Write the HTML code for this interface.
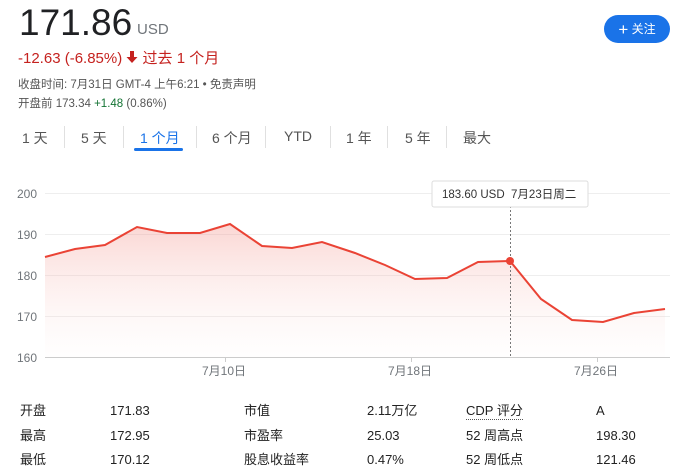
<!DOCTYPE html>
<html><head><meta charset="utf-8"><style>
body{margin:0;width:690px;height:474px;background:#fff;font-family:"Liberation Sans","Noto Sans CJK SC",sans-serif;position:relative;overflow:hidden;color:#222}
.a{position:absolute;white-space:nowrap}
.t{font-size:14px;color:#555;top:128px}
.d{position:absolute;top:126px;width:1px;height:22px;background:#e0e0e0}
.s{font-size:13px;color:#222;line-height:16px;height:16px}
</style></head><body>
<div class="a" style="left:19px;top:2px;font-size:37px;color:#202124">171.86</div>
<div class="a" style="left:137px;top:21px;font-size:15px;color:#70757a">USD</div>
<div class="a" style="left:18px;top:47px;font-size:15px;color:#c5221f">-12.63 (-6.85%) <svg width="12" height="14" viewBox="0 0 12 14" style="vertical-align:-1px"><path d="M4 1h4v6h3.5L6 13 0.5 7H4z" fill="#c5221f"/></svg> 过去 1 个月</div>
<div class="a" style="left:18px;top:76px;font-size:11.5px;color:#555">收盘时间: 7月31日 GMT-4 上午6:21 • 免责声明</div>
<div class="a" style="left:18px;top:95px;font-size:11.5px;color:#555">开盘前 173.34 <span style="color:#137333">+1.48</span> (0.86%)</div>
<div class="a" style="left:604px;top:15px;width:66px;height:28px;border-radius:14px;background:#1a73e8;color:#fff;font-size:12px;line-height:28px;text-align:center"><span style="font-size:17px;vertical-align:-2px">+</span> 关注</div>
<div class="a t" style="left:22px">1 天</div><div class="d" style="left:64px"></div>
<div class="a t" style="left:81px">5 天</div><div class="d" style="left:123px"></div>
<div class="a t" style="left:140px;color:#1a73e8">1 个月</div><div class="d" style="left:196px"></div>
<div class="a" style="left:134px;top:148px;width:49px;height:3px;border-radius:2px;background:#1a73e8"></div>
<div class="a t" style="left:212px">6 个月</div><div class="d" style="left:265px"></div>
<div class="a t" style="left:284px">YTD</div><div class="d" style="left:330px"></div>
<div class="a t" style="left:346px">1 年</div><div class="d" style="left:387px"></div>
<div class="a t" style="left:405px">5 年</div><div class="d" style="left:446px"></div>
<div class="a t" style="left:463px">最大</div>
<svg class="a" style="left:0;top:0" width="690" height="390">
<defs><linearGradient id="g" x1="0" y1="0" x2="0" y2="1"><stop offset="0" stop-color="#f28b82" stop-opacity=".35"/><stop offset="1" stop-color="#fce8e6" stop-opacity=".05"/></linearGradient></defs>
<g stroke="#eee" stroke-width="1"><line x1="45" y1="193.5" x2="670" y2="193.5"/><line x1="45" y1="234.5" x2="670" y2="234.5"/><line x1="45" y1="275.5" x2="670" y2="275.5"/><line x1="45" y1="316.5" x2="670" y2="316.5"/></g>
<line x1="45" y1="357.5" x2="670" y2="357.5" stroke="#ccc"/>
<g stroke="#ccc"><line x1="225.5" y1="357" x2="225.5" y2="362"/><line x1="411.5" y1="357" x2="411.5" y2="362"/><line x1="597.5" y1="357" x2="597.5" y2="362"/></g>
<g font-size="12" fill="#70757a" font-family="Liberation Sans,Noto Sans CJK SC,sans-serif">
<text x="17" y="198">200</text><text x="17" y="239">190</text><text x="17" y="280">180</text><text x="17" y="321">170</text><text x="17" y="362">160</text>
<text x="202" y="375">7月10日</text><text x="388" y="375">7月18日</text><text x="574" y="375">7月26日</text></g>
<path d="M45 257L75 249L105 245L137 227L167 233L200 233L230 224L262 246L292 248L322 242L355 253L385 265L415 279L447 278L478 262L510 261L541 299L572 320L603 322L634 313L665 309L665 357L45 357Z" fill="url(#g)"/>
<path d="M45 257L75 249L105 245L137 227L167 233L200 233L230 224L262 246L292 248L322 242L355 253L385 265L415 279L447 278L478 262L510 261L541 299L572 320L603 322L634 313L665 309" fill="none" stroke="#ea4335" stroke-width="2"/>
<line x1="510.5" y1="206" x2="510.5" y2="357" stroke="#777" stroke-dasharray="2,2"/>
<circle cx="510" cy="261" r="4" fill="#ea4335"/>
<rect x="432" y="181" width="156" height="26" rx="2" fill="#fff" stroke="#ddd"/>
<text x="442" y="198" font-size="11.5" fill="#333" font-family="Liberation Sans,Noto Sans CJK SC,sans-serif">183.60 USD &#160;7月23日周二</text>
</svg>
<div class="a s" style="left:20px;top:403px">开盘</div><div class="a s" style="left:110px;top:403px">171.83</div>
<div class="a s" style="left:244px;top:403px">市值</div><div class="a s" style="left:367px;top:403px">2.11万亿</div>
<div class="a s" style="left:466px;top:403px;border-bottom:1px dotted #555">CDP 评分</div><div class="a s" style="left:596px;top:403px">A</div>
<div class="a s" style="left:20px;top:428px">最高</div><div class="a s" style="left:110px;top:428px">172.95</div>
<div class="a s" style="left:244px;top:428px">市盈率</div><div class="a s" style="left:367px;top:428px">25.03</div>
<div class="a s" style="left:466px;top:428px">52 周高点</div><div class="a s" style="left:596px;top:428px">198.30</div>
<div class="a s" style="left:20px;top:452px">最低</div><div class="a s" style="left:110px;top:452px">170.12</div>
<div class="a s" style="left:244px;top:452px">股息收益率</div><div class="a s" style="left:367px;top:452px">0.47%</div>
<div class="a s" style="left:466px;top:452px">52 周低点</div><div class="a s" style="left:596px;top:452px">121.46</div>
</body></html>
